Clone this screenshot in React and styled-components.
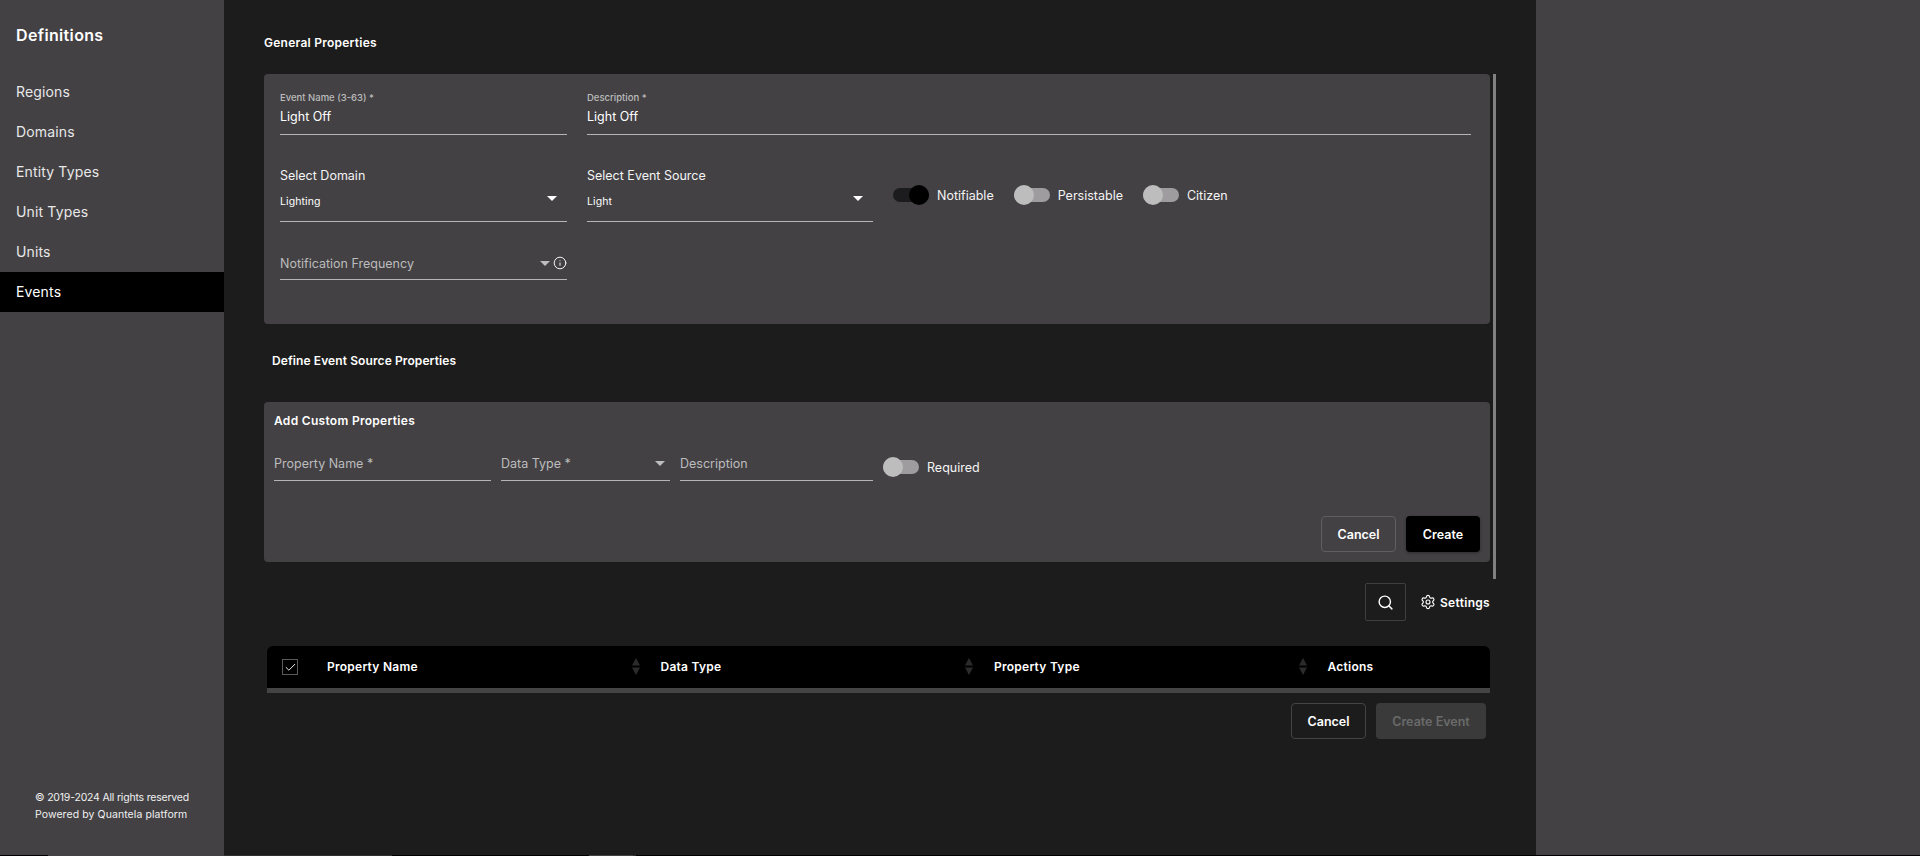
import React from 'react';
import styled, { createGlobalStyle } from 'styled-components';
import { Check, Info, Search, Settings } from 'lucide-react';

const GlobalStyle = createGlobalStyle`
  html, body {
    margin: 0;
    padding: 0;
    height: 856px;
    overflow: hidden;
    background: #000;
    font-family: 'Inter', 'Open Sans', sans-serif;
    color: #fff;
  }
  * {
    box-sizing: border-box;
  }
`;

const Page = styled('div')`
  display: flex;
  height: 855px;
`;

const Sidebar = styled('aside')`
  width: 224px;
  flex: none;
  display: flex;
  flex-direction: column;
  background: #434144;
`;

const Brand = styled('div')`
  padding: 24px 16px 0;
  height: 72px;
  font-size: 16px;
  line-height: 22px;
  font-weight: 600;
  letter-spacing: 0.35px;
`;

const NavItem = styled('div')`
  height: 40px;
  padding: 0 0 1px 16px;
  display: flex;
  align-items: center;
  font-size: 14px;
  letter-spacing: 0.15px;
  color: ${(p) => (p.$active ? '#fff' : '#e8e8e8')};
  background: ${(p) => (p.$active ? '#000' : 'transparent')};
`;

const Copyright = styled('div')`
  margin-top: auto;
  padding: 0 0 32px 35px;
  color: #f0f0f0;
`;

const CopyLine = styled('div')`
  font-size: 10.5px;
  line-height: 17px;
  letter-spacing: ${(p) => p.$spacing}px;
`;

const Main = styled('main')`
  width: 1312px;
  flex: none;
  padding: 34px 46px 0 40px;
  background: #1c1c1c;
`;

const RightPane = styled('div')`
  flex: 1;
  background: #434144;
`;

const Heading = styled('div')`
  font-size: 12px;
  line-height: 18px;
  font-weight: 600;
  letter-spacing: ${(p) => p.$spacing}px;
  padding-left: ${(p) => p.$indent || 0}px;
  margin: ${(p) => p.$margin || 0};
`;

const ScrollArea = styled('div')`
  position: relative;
`;

const ScrollThumb = styled('div')`
  position: absolute;
  top: 0;
  right: -6px;
  width: 3px;
  height: 505px;
  background: #808080;
`;

const Card = styled('section')`
  background: #434144;
  border-radius: 4px;
`;

const GeneralCard = styled(Card)`
  height: 250px;
  padding: 17px 19px 0 16px;
`;

const CustomCard = styled(Card)`
  height: 160px;
  padding: 10px 10px 0;
`;

const Row = styled('div')`
  display: flex;
  gap: ${(p) => p.$gap || 20}px;
  margin-top: ${(p) => p.$top || 0}px;
`;

const Field = styled('div')`
  flex: ${(p) => (p.$w ? 'none' : 1)};
  width: ${(p) => (p.$w ? `${p.$w}px` : 'auto')};
  border-bottom: 1px solid #b5b5b5;
  padding-bottom: ${(p) => p.$pad ?? 7}px;
`;

const TinyLabel = styled('div')`
  font-size: 9.5px;
  line-height: 14px;
  font-weight: 500;
  color: #bcbcbc;
  margin-bottom: 2px;
`;

const Value = styled('div')`
  font-size: 12.5px;
  line-height: 20px;
  color: #fff;
`;

const SelectLabel = styled('div')`
  font-size: 12.5px;
  line-height: 20px;
  color: #f4f4f4;
  margin-bottom: 6px;
`;

const SelectValue = styled('div')`
  display: flex;
  align-items: center;
  justify-content: space-between;
  padding-right: 10px;
  height: 18px;
  font-size: 10.5px;
  letter-spacing: 0.1px;
`;

const Caret = styled('span')`
  width: 0;
  height: 0;
  margin-bottom: ${(p) => p.$lift || 0}px;
  border-left: 5px solid transparent;
  border-right: 5px solid transparent;
  border-top: 5px solid ${(p) => p.$color || '#fff'};
`;

const Placeholder = styled('div')`
  display: flex;
  align-items: center;
  justify-content: space-between;
  height: 20px;
  padding-right: ${(p) => p.$right || 0}px;
  font-size: 12.5px;
  color: #bcbcbc;
`;

const IconGroup = styled('span')`
  display: flex;
  align-items: center;
  gap: 3px;
  color: #fff;
`;

const ToggleRow = styled('div')`
  display: flex;
  align-items: center;
  gap: 20px;
  height: 20px;
  margin-top: 19px;
`;

const ToggleWrap = styled('label')`
  display: flex;
  align-items: center;
  gap: 8px;
  font-size: 12.5px;
  letter-spacing: ${(p) => p.$spacing || 0}px;
  color: #f4f4f4;
`;

const Track = styled('span')`
  position: relative;
  width: 36px;
  height: 14px;
  border-radius: 7px;
  background: ${(p) => (p.$on ? '#1c1c1e' : '#9e9c9f')};
`;

const Thumb = styled('span')`
  position: absolute;
  top: -3px;
  left: ${(p) => (p.$on ? 16 : 0)}px;
  width: 20px;
  height: 20px;
  border-radius: 50%;
  background: ${(p) => (p.$on ? '#000' : '#bdbdbd')};
`;

const Actions = styled('div')`
  display: flex;
  justify-content: flex-end;
  gap: 10px;
  margin-top: ${(p) => p.$top}px;
  padding-right: ${(p) => p.$right || 0}px;
`;

const Button = styled('button')`
  height: 36px;
  width: ${(p) => p.$w || 75}px;
  border-radius: 4px;
  font-family: inherit;
  font-size: 12.5px;
  font-weight: 600;
  color: #fff;
  border: 1px solid ${(p) => (p.$dim ? '#444' : '#5f5e60')};
  background: transparent;
`;

const PrimaryButton = styled(Button)`
  border: 0;
  background: #000;
  box-shadow: 0 1px 3px rgba(0, 0, 0, 0.35);
`;

const DisabledButton = styled(Button)`
  border: 0;
  background: #3a3a3a;
  color: #6a6a6a;
`;

const Toolbar = styled('div')`
  display: flex;
  align-items: center;
  justify-content: flex-end;
  gap: 14px;
  margin-top: 21px;
`;

const SearchBox = styled('div')`
  width: 41px;
  height: 38px;
  display: flex;
  align-items: center;
  justify-content: center;
  border: 1px solid #3f3f3f;
  border-radius: 2px;
`;

const SettingsLink = styled('div')`
  display: flex;
  align-items: center;
  gap: 4px;
  font-size: 12px;
  font-weight: 600;
  letter-spacing: 0.3px;
`;

const TableHead = styled('div')`
  display: flex;
  align-items: center;
  height: 47px;
  margin-top: 25px;
  margin-left: 3px;
  border-bottom: 5px solid #444;
  border-radius: 6px 6px 0 0;
  background: #000;
`;

const CheckCell = styled('div')`
  width: 60px;
  flex: none;
  padding-left: 15px;
`;

const CheckBox = styled('span')`
  width: 16px;
  height: 16px;
  display: flex;
  align-items: center;
  justify-content: center;
  border: 1px solid #5a5a5a;
`;

const HeadCell = styled('div')`
  display: flex;
  align-items: center;
  justify-content: space-between;
  width: 333.5px;
  flex: ${(p) => (p.$last ? 1 : 'none')};
  padding: 0 21px 1px 0;
  font-size: 12px;
  font-weight: 600;
  letter-spacing: 0.25px;
`;

const BottomStrip = styled('div')`
  display: flex;
  height: 1px;
  background: #000;
`;

const StripSegment = styled('span')`
  width: ${(p) => p.$w}px;
  background: ${(p) => p.$color};
`;

const SortIcon = () => (
  <svg width="8" height="17" viewBox="0 0 8 17">
    <path d="M4 0L8 7.5H0Z" fill="#2b2b2b" />
    <path d="M4 17L0 9.5H8Z" fill="#2b2b2b" />
  </svg>
);

const Toggle = ({ on, label, spacing }) => (
  <ToggleWrap $spacing={spacing}>
    <Track $on={on}>
      <Thumb $on={on} />
    </Track>
    {label}
  </ToggleWrap>
);

const navItems = ['Regions', 'Domains', 'Entity Types', 'Unit Types', 'Units', 'Events'];

const stripSegments = [
  [48, '#000'],
  [176, '#434144'],
  [168, '#2f2f2f'],
  [197, '#000'],
  [44, '#434144'],
  [3, '#2a2a2a'],
];

export default function App() {
  return (
    <>
      <GlobalStyle />
      <Page>
        <Sidebar>
          <Brand>Definitions</Brand>
          {navItems.map((item) => (
            <NavItem key={item} $active={item === 'Events'}>
              {item}
            </NavItem>
          ))}
          <Copyright>
            <CopyLine $spacing={-0.2}>© 2019-2024 All rights reserved</CopyLine>
            <CopyLine $spacing={0.08}>Powered by Quantela platform</CopyLine>
          </Copyright>
        </Sidebar>
        <Main>
          <Heading $margin="0 0 22px" $spacing={0.25}>
            General Properties
          </Heading>
          <ScrollArea>
            <ScrollThumb />
            <GeneralCard>
              <Row>
                <Field $w={287}>
                  <TinyLabel>Event Name (3-63) *</TinyLabel>
                  <Value>Light Off</Value>
                </Field>
                <Field>
                  <TinyLabel>Description *</TinyLabel>
                  <Value>Light Off</Value>
                </Field>
              </Row>
              <Row $top={31}>
                <Field $w={287} $pad={11}>
                  <SelectLabel>Select Domain</SelectLabel>
                  <SelectValue>
                    Lighting
                    <Caret $lift={6} />
                  </SelectValue>
                </Field>
                <Field $w={286} $pad={11}>
                  <SelectLabel>Select Event Source</SelectLabel>
                  <SelectValue>
                    Light
                    <Caret $lift={6} />
                  </SelectValue>
                </Field>
                <ToggleRow>
                  <Toggle on label="Notifiable" />
                  <Toggle label="Persistable" />
                  <Toggle label="Citizen" />
                </ToggleRow>
              </Row>
              <Row $top={31}>
                <Field $w={287} $pad={6}>
                  <Placeholder>
                    Notification Frequency
                    <IconGroup>
                      <Caret $color="#bdbdbd" />
                      <Info size={14} strokeWidth={1.6} />
                    </IconGroup>
                  </Placeholder>
                </Field>
              </Row>
            </GeneralCard>
            <Heading $indent={8} $margin="28px 0 32px" $spacing={0.1}>
              Define Event Source Properties
            </Heading>
            <CustomCard>
              <Heading $spacing={0.3}>Add Custom Properties</Heading>
              <Row $top={23} $gap={10}>
                <Field $w={217}>
                  <Placeholder>Property Name *</Placeholder>
                </Field>
                <Field $w={169}>
                  <Placeholder $right={5}>
                    Data Type *
                    <Caret $color="#bdbdbd" />
                  </Placeholder>
                </Field>
                <Field $w={193}>
                  <Placeholder>Description</Placeholder>
                </Field>
                <Toggle label="Required" />
              </Row>
              <Actions $top={35}>
                <Button>Cancel</Button>
                <PrimaryButton $w={74}>Create</PrimaryButton>
              </Actions>
            </CustomCard>
          </ScrollArea>
          <Toolbar>
            <SearchBox>
              <Search size={17} strokeWidth={2} />
            </SearchBox>
            <SettingsLink>
              <Settings size={16} strokeWidth={1.7} />
              Settings
            </SettingsLink>
          </Toolbar>
          <TableHead>
            <CheckCell>
              <CheckBox>
                <Check size={13} strokeWidth={1.7} />
              </CheckBox>
            </CheckCell>
            <HeadCell>
              Property Name
              <SortIcon />
            </HeadCell>
            <HeadCell>
              Data Type
              <SortIcon />
            </HeadCell>
            <HeadCell>
              Property Type
              <SortIcon />
            </HeadCell>
            <HeadCell $last>Actions</HeadCell>
          </TableHead>
          <Actions $top={10} $right={4}>
            <Button $dim>Cancel</Button>
            <DisabledButton $w={110}>Create Event</DisabledButton>
          </Actions>
        </Main>
        <RightPane />
      </Page>
      <BottomStrip>
        {stripSegments.map(([w, color], i) => (
          <StripSegment key={i} $w={w} $color={color} />
        ))}
      </BottomStrip>
    </>
  );
}
